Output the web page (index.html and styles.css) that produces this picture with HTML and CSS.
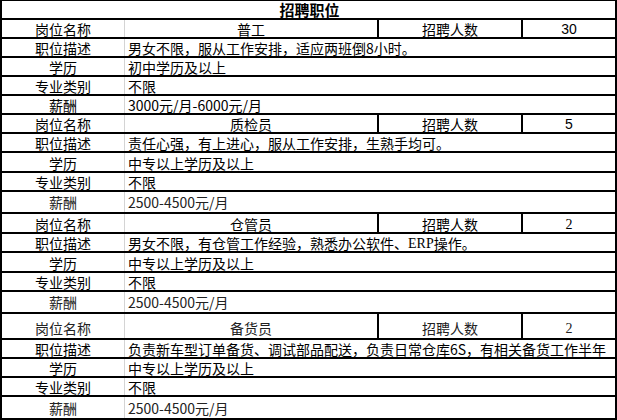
FILE: index.html
```html
<!DOCTYPE html>
<html lang="zh-CN">
<head>
<meta charset="utf-8">
<title>招聘职位</title>
<link rel="stylesheet" href="styles.css">
</head>
<body>
<div class="sheet">
  <div class="row title h19"><span>招聘职位</span></div>

  <div class="row head h19">
    <div class="c lbl">岗位名称</div><div class="c ctr">普工</div><div class="c ctr">招聘人数</div><div class="c ctr num">30</div>
  </div>
  <div class="row pair h19"><div class="c lbl">职位描述</div><div class="c val">男女不限，服从工作安排，适应两班倒8小时。</div></div>
  <div class="row pair h19"><div class="c lbl">学历</div><div class="c val">初中学历及以上</div></div>
  <div class="row pair h19"><div class="c lbl">专业类别</div><div class="c val">不限</div></div>
  <div class="row pair h19"><div class="c lbl">薪酬</div><div class="c val">3000元/月-6000元/月</div></div>

  <div class="row head h19">
    <div class="c lbl">岗位名称</div><div class="c ctr">质检员</div><div class="c ctr">招聘人数</div><div class="c ctr num">5</div>
  </div>
  <div class="row pair h19"><div class="c lbl">职位描述</div><div class="c val">责任心强，有上进心，服从工作安排，生熟手均可。</div></div>
  <div class="row pair h20"><div class="c lbl">学历</div><div class="c val">中专以上学历及以上</div></div>
  <div class="row pair h19"><div class="c lbl">专业类别</div><div class="c val">不限</div></div>
  <div class="row pair h22 soft"><div class="c lbl">薪酬</div><div class="c val">2500-4500元/月</div></div>

  <div class="row head h20">
    <div class="c lbl">岗位名称</div><div class="c ctr">仓管员</div><div class="c ctr">招聘人数</div><div class="c ctr num serif">2</div>
  </div>
  <div class="row pair h19"><div class="c lbl">职位描述</div><div class="c val">男女不限，有仓管工作经验，熟悉办公软件、<span class="serif">ERP</span>操作。</div></div>
  <div class="row pair h20"><div class="c lbl">学历</div><div class="c val">中专以上学历及以上</div></div>
  <div class="row pair h19"><div class="c lbl">专业类别</div><div class="c val">不限</div></div>
  <div class="row pair h22 soft"><div class="c lbl">薪酬</div><div class="c val">2500-4500元/月</div></div>

  <div class="row head h26 soft">
    <div class="c lbl">岗位名称</div><div class="c ctr">备货员</div><div class="c ctr">招聘人数</div><div class="c ctr num serif">2</div>
  </div>
  <div class="row pair h19"><div class="c lbl">职位描述</div><div class="c val">负责新车型订单备货、调试部品配送，负责日常仓库6S，有相关备货工作半年</div></div>
  <div class="row pair h19"><div class="c lbl">学历</div><div class="c val">中专以上学历及以上</div></div>
  <div class="row pair h19"><div class="c lbl">专业类别</div><div class="c val">不限</div></div>
  <div class="row pair h23 soft"><div class="c lbl">薪酬</div><div class="c val">2500-4500元/月</div></div>
</div>
</body>
</html>
```

FILE: styles.css
```css
* { box-sizing: border-box; }
html, body { margin: 0; padding: 0; background: #fff; }
body {
  font-family: "Noto Sans CJK SC", "Liberation Sans", sans-serif;
  font-size: 14px;
  color: #000;
}
.sheet {
  width: 617px;
  border-top: 1px solid #000;
  border-left: 2px solid #000;
  border-right: 2px solid #000;
}
.row {
  display: grid;
  border-bottom: 2px solid #000;
}
.h19 { height: 19px; }
.h20 { height: 20px; }
.h22 { height: 22px; }
.h23 { height: 23px; }
.h26 { height: 26px; }

.title {
  display: flex;
  align-items: flex-end;
  justify-content: center;
  font-weight: bold;
  font-size: 15px;
  line-height: 16px;
  padding-left: 2px;
}
.head { grid-template-columns: 123px 254px 144px 1fr; }
.pair { grid-template-columns: 123px 1fr; }

.c {
  display: flex;
  align-items: flex-end;
  line-height: 15px;
  white-space: nowrap;
}
.lbl {
  justify-content: center;
  border-right: 1px solid #d4d4d4;
}
.ctr { justify-content: center; }
.head .ctr:nth-child(2), .head .ctr:nth-child(3) { border-right: 2px solid #000; }
.val { padding-left: 3px; }
.num { font-family: "Liberation Sans", sans-serif; }
.serif { font-family: "Liberation Serif", serif; }
.soft { color: #222; }
.soft .c { padding-bottom: 2px; }
```
